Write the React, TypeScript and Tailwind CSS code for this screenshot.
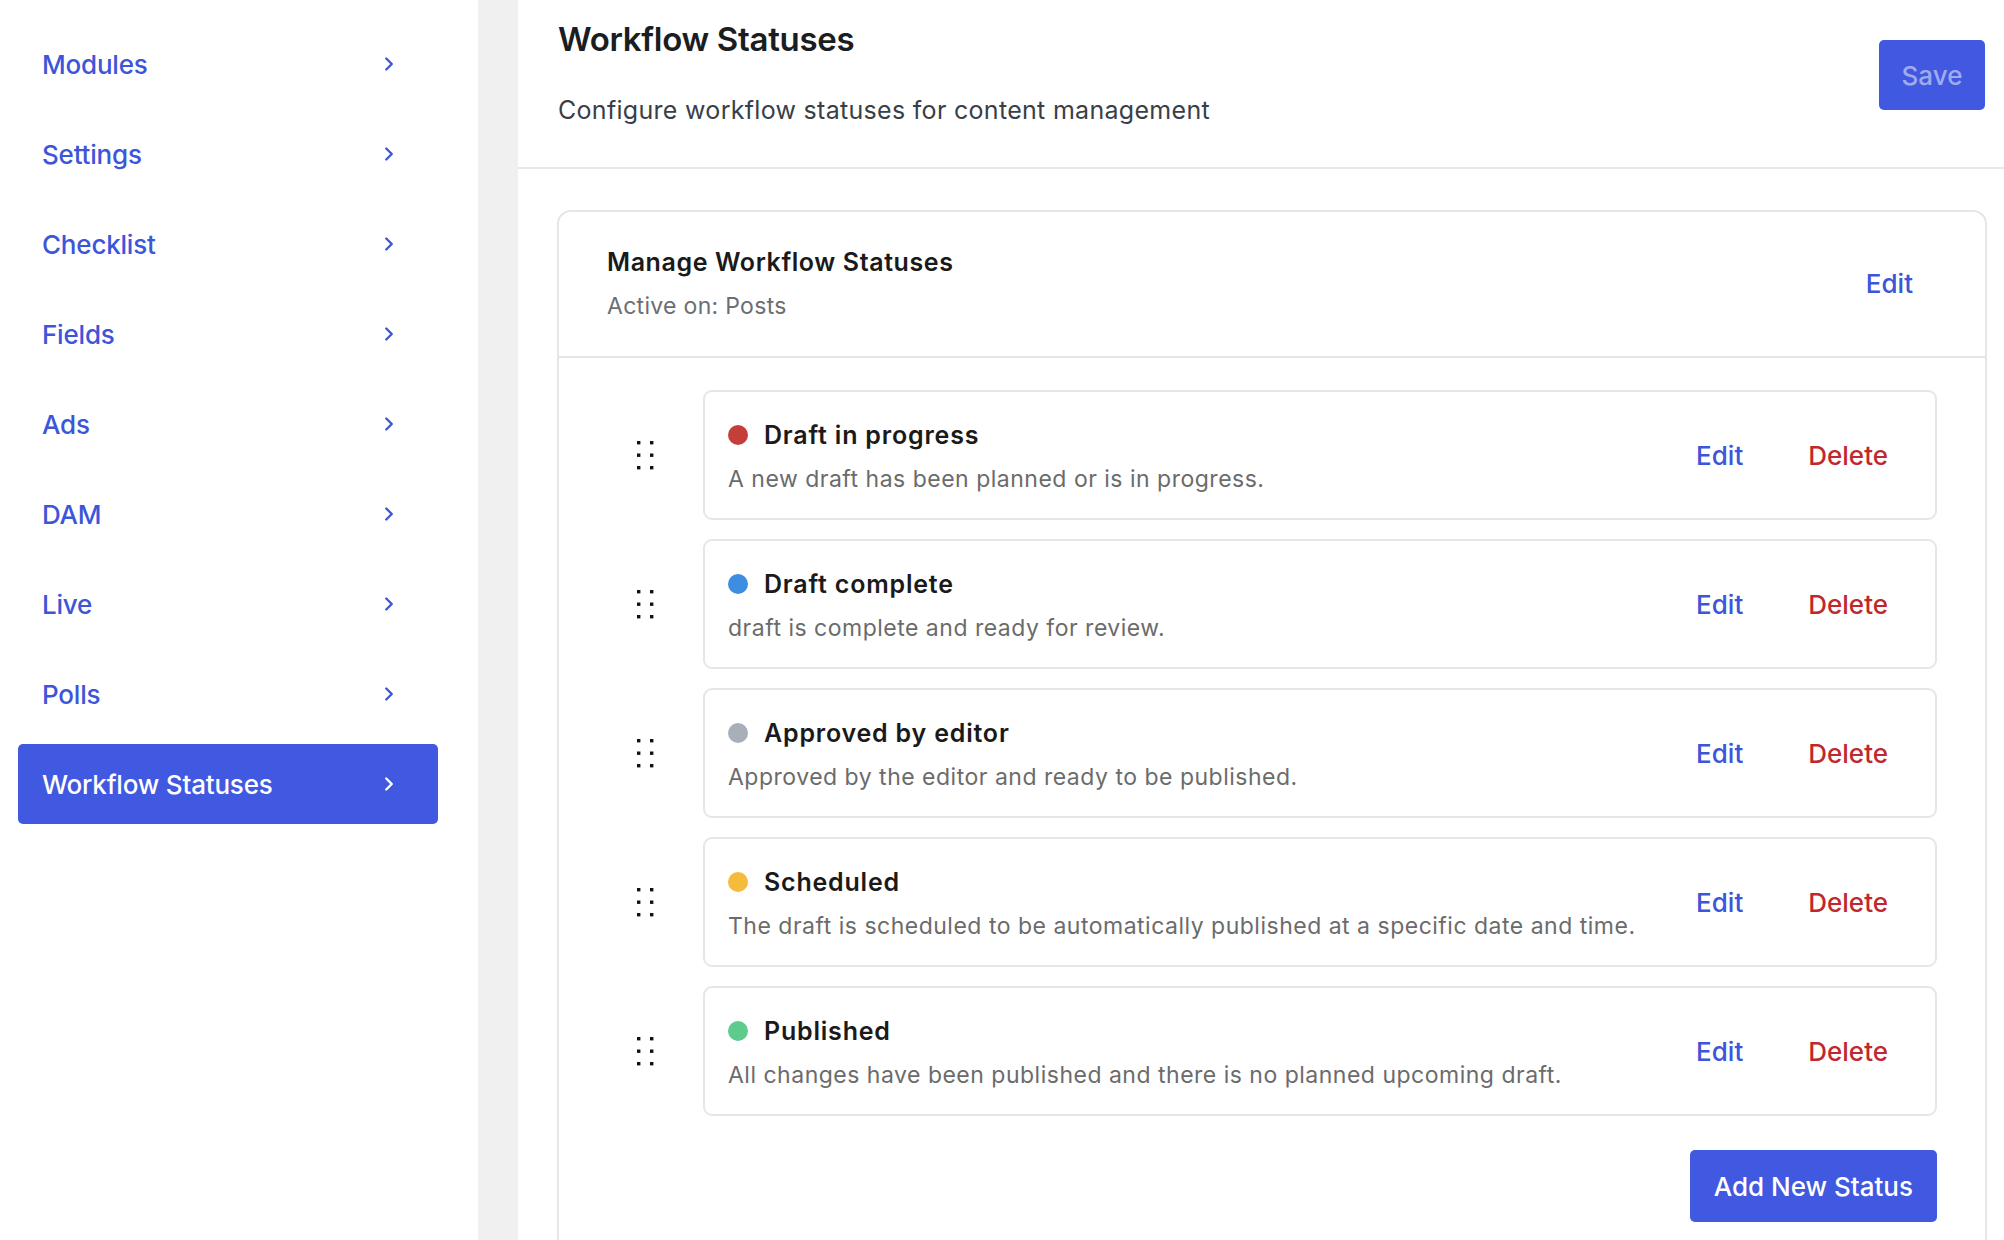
import React from 'react';
import { ChevronRight } from 'lucide-react';

const navItems = ['Modules', 'Settings', 'Checklist', 'Fields', 'Ads', 'DAM', 'Live', 'Polls', 'Workflow Statuses'];

const statuses = [
  { name: 'Draft in progress', desc: 'A new draft has been planned or is in progress.', dot: 'bg-[#c53f3a]' },
  { name: 'Draft complete', desc: 'draft is complete and ready for review.', dot: 'bg-[#3d8ee0]' },
  { name: 'Approved by editor', desc: 'Approved by the editor and ready to be published.', dot: 'bg-[#a9afb9]' },
  { name: 'Scheduled', desc: 'The draft is scheduled to be automatically published at a specific date and time.', dot: 'bg-[#f4bb3c]' },
  { name: 'Published', desc: 'All changes have been published and there is no planned upcoming draft.', dot: 'bg-[#5ccb8c]' },
];

const DragHandle: React.FC = () => (
  <svg width="20" height="32" viewBox="0 0 20 32" className="shrink-0">
    {[0, 1, 2].map((r) => (
      <g key={r}>
        <rect x="2" y={2 + r * 12.5} width="3.4" height="3.4" fill="#111" />
        <rect x="15" y={2 + r * 12.5} width="3.4" height="3.4" fill="#111" />
      </g>
    ))}
  </svg>
);

export default function App() {
  return (
    <div
      className="flex h-[1240px] w-full overflow-hidden bg-white"
      style={{ fontFamily: 'Inter, "Noto Sans", sans-serif' }}
    >
      <aside className="w-[478px] shrink-0 bg-white pt-6">
        <nav className="flex flex-col gap-[10px] pl-[18px]">
          {navItems.map((item) => {
            const active = item === 'Workflow Statuses';
            return (
              <div
                key={item}
                className={
                  active
                    ? 'flex h-20 w-[420px] items-center justify-between rounded-[5px] bg-[#4158e0] pl-6 pr-[38px] text-white'
                    : 'flex h-20 w-[420px] items-center justify-between pl-6 pr-[38px] text-[#3d55d9]'
                }
              >
                <span className="text-[26px] font-medium tracking-[-0.2px]">{item}</span>
                <ChevronRight size={22} strokeWidth={2.6} />
              </div>
            );
          })}
        </nav>
      </aside>

      <div className="w-10 shrink-0 bg-[#f0f0f0]" />

      <main className="flex min-w-0 flex-1 flex-col">
        <header className="flex h-[169px] shrink-0 items-start justify-between border-b-2 border-[#e8e8e8] pl-10 pr-[19px]">
          <div className="pt-[19px]">
            <h1 className="text-[33px] font-semibold leading-10 tracking-[-0.3px] text-[#1a1d21]">Workflow Statuses</h1>
            <p className="mt-[35px] text-[25px] leading-8 tracking-[0.3px] text-[#3a3f47]">
              Configure workflow statuses for content management
            </p>
          </div>
          <button className="mt-10 h-[70px] w-[106px] rounded-[5px] bg-[#4158e0] text-[26px] font-medium text-white/50">
            Save
          </button>
        </header>

        <div className="pl-[39px] pr-[17px] pt-[41px]">
          <section className="rounded-[14px] border-2 border-[#e6e6e6]">
            <div className="flex items-center justify-between border-b-2 border-[#e6e6e6] pb-[35px] pl-[48px] pr-[48px] pt-[34px]">
              <div>
                <h2 className="text-[25px] font-semibold leading-8 tracking-[0.6px] text-[#1a1a1a]">Manage Workflow Statuses</h2>
                <p className="mt-[13px] text-[23px] leading-[30px] tracking-[0.3px] text-[#6b6e73]">Active on: Posts</p>
              </div>
              <button className="px-6 text-[26px] font-medium text-[#3d55d9]">Edit</button>
            </div>

            <div className="flex flex-col pb-10 pl-[48px] pr-[48px] pt-[32px]">
              <div className="flex flex-col gap-[19px]">
                {statuses.map((s) => (
                  <div key={s.name} className="flex items-center">
                    <div className="flex w-[96px] shrink-0 items-center pl-[28px]">
                      <DragHandle />
                    </div>
                    <div className="flex h-[130px] flex-1 items-center justify-between rounded-[9px] border-2 border-[#e6e6e6] pl-[23px] pr-[23px]">
                      <div className="flex flex-col gap-[13px] pt-[2px]">
                        <div className="flex items-center gap-4">
                          <span className={`h-5 w-5 rounded-full ${s.dot}`} />
                          <span className="text-[25px] font-semibold leading-8 tracking-[0.8px] text-[#1a1a1a]">{s.name}</span>
                        </div>
                        <p className="text-[23px] leading-[30px] tracking-[0.5px] text-[#6b6b6b]">{s.desc}</p>
                      </div>
                      <div className="flex items-center gap-[17px]">
                        <button className="px-6 text-[26px] font-medium text-[#3d55d9]">Edit</button>
                        <button className="px-6 text-[26px] font-medium text-[#c0282d]">Delete</button>
                      </div>
                    </div>
                  </div>
                ))}
              </div>
              <div className="mt-[34px] flex justify-end">
                <button className="h-[72px] rounded-[5px] bg-[#4158e0] px-6 text-[26px] font-medium text-white">
                  Add New Status
                </button>
              </div>
            </div>
          </section>
        </div>
      </main>
    </div>
  );
}
